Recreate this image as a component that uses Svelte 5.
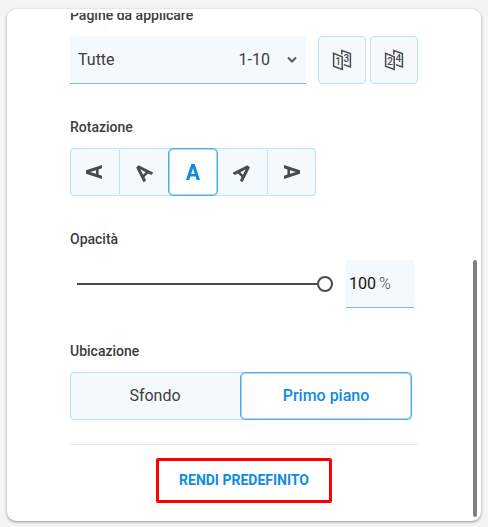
<script>
  let pages = $state("all");
  let rotation = $state(0);
  let opacity = $state(100);
  let layer = $state("front");

  const rotations = [-90, -45, 0, 45, 90];
  const layers = [
    { id: "back", name: "Sfondo" },
    { id: "front", name: "Primo piano" },
  ];
</script>

<main>
  <section class="card">
    <div class="content">
      <div class="group">
        <label class="title" for="pages">Pagine da applicare</label>
        <div class="row">
          <div class="dropdown">
            <select id="pages" bind:value={pages}>
              <option value="all">Tutte</option>
              <option value="odd">Dispari</option>
              <option value="even">Pari</option>
            </select>
            <span>1-10</span>
            <svg width="12" height="8" viewBox="0 0 12 8">
              <path d="M2 1.5l4 4 4-4" />
            </svg>
          </div>
          <div class="icons">
            <button class="icon" aria-label="Pagine dispari" onclick={() => (pages = "odd")}>
              <svg width="20" height="22" viewBox="0 0 20 22">
                <path d="M1.6 4.4v12.8l8.6 3.3V7.7z" />
                <path d="M9.8 5.6V1.6l8.6 3v13.4l-6.6-2.4" />
                <text x="3.2" y="15.8">1</text>
                <text x="11.4" y="12.8">3</text>
              </svg>
            </button>
            <button class="icon" aria-label="Pagine pari" onclick={() => (pages = "even")}>
              <svg width="20" height="22" viewBox="0 0 20 22">
                <path d="M1.6 4.4v12.8l8.6 3.3V7.7z" />
                <path d="M9.8 5.6V1.6l8.6 3v13.4l-6.6-2.4" />
                <text x="3.2" y="15.8">2</text>
                <text x="11.4" y="12.8">4</text>
              </svg>
            </button>
          </div>
        </div>
      </div>

      <div class="group">
        <span class="title" id="rotation">Rotazione</span>
        <div class="segments rotation" role="group" aria-labelledby="rotation">
          {#each rotations as angle}
            <button
              class:selected={rotation === angle}
              aria-pressed={rotation === angle}
              aria-label="{angle}°"
              onclick={() => (rotation = angle)}
            >
              <svg width="20" height="20" viewBox="-10 -10 20 20">
                <path
                  transform="rotate({angle})"
                  d="M-1.7-8H1.7L7 8H3.7L2.6 4.6H-2.6L-3.7 8H-7zM0-3.8L-1.8 2H1.8z"
                />
              </svg>
            </button>
          {/each}
        </div>
      </div>

      <div class="group">
        <label class="title" for="opacity">Opacità</label>
        <div class="row opacity">
          <input id="opacity" type="range" min="0" max="100" bind:value={opacity} />
          <div class="percent">
            <input type="text" aria-label="Opacità in percentuale" bind:value={opacity} />
            <span>%</span>
          </div>
        </div>
      </div>

      <div class="group">
        <span class="title" id="layer">Ubicazione</span>
        <div class="segments layer" role="group" aria-labelledby="layer">
          {#each layers as item}
            <button
              class:selected={layer === item.id}
              aria-pressed={layer === item.id}
              onclick={() => (layer = item.id)}
            >
              {item.name}
            </button>
          {/each}
        </div>
      </div>

      <footer>
        <button class="default">RENDI PREDEFINITO</button>
      </footer>
    </div>
    <div class="rail"><div class="thumb"></div></div>
  </section>
</main>

<style>
  :global(body) {
    background: #f4f4f4;
  }

  main {
    box-sizing: border-box;
    height: 100vh;
    padding: 9px 7px 6px;
    font-family: Roboto, "Liberation Sans", sans-serif;
    font-size: 16px;
    color: #3c3d3f;
  }

  .card {
    box-sizing: border-box;
    height: 100%;
    padding: 4px;
    display: flex;
    background: #fff;
    border-radius: 9px;
    box-shadow: 0 1px 3px rgba(0, 0, 0, 0.4);
  }

  .content {
    flex: 1;
    min-width: 0;
    padding: 0 55px 14px 59px;
    display: flex;
    flex-direction: column;
    justify-content: flex-end;
    overflow: hidden;
  }

  .rail {
    width: 4px;
    display: flex;
    flex-direction: column;
    justify-content: flex-end;
  }

  .thumb {
    height: 51%;
    border-radius: 2px;
    background: #808080;
  }

  button,
  input,
  select {
    box-sizing: border-box;
    margin: 0;
    padding: 0;
    border: 0;
    background: none;
    font: inherit;
    color: inherit;
  }

  button {
    cursor: pointer;
  }

  .group {
    display: flex;
    flex-direction: column;
    gap: 10px;
    margin-bottom: 32px;
    flex-shrink: 0;
  }

  .title {
    font-size: 14px;
    font-weight: 500;
    line-height: 22px;
  }

  .row {
    display: flex;
    gap: 12px;
  }

  .dropdown {
    flex: 1;
    box-sizing: border-box;
    height: 48px;
    padding: 0 8px;
    display: flex;
    align-items: center;
    border-bottom: 1px solid #75b9e6;
    border-radius: 4px 4px 0 0;
    background: #f3f9fd;
  }

  select {
    flex: 1;
    appearance: none;
    outline: none;
  }

  .dropdown svg {
    margin-left: 16px;
    fill: none;
    stroke: #5a5b5d;
    stroke-width: 2;
  }

  .icons {
    display: flex;
    gap: 4px;
  }

  .icon {
    width: 48px;
    height: 48px;
    display: flex;
    align-items: center;
    justify-content: center;
    border: 1px solid #bfe1f8;
    border-radius: 4px;
    background: #f3f9fd;
  }

  .icon path {
    fill: none;
    stroke: #4a4b4d;
    stroke-width: 1.5;
  }

  .icon text {
    font-size: 10px;
    font-weight: 500;
    fill: #4a4b4d;
  }

  .segments {
    display: flex;
    height: 48px;
    border-radius: 4px;
    background: #f3f9fd;
    box-shadow: inset 0 0 0 1px #bfe1f8;
  }

  .segments button {
    flex: 1;
    display: flex;
    align-items: center;
    justify-content: center;
  }

  .segments button + button {
    background: linear-gradient(#bfe1f8, #bfe1f8) left center / 1px 44px no-repeat;
  }

  .segments .selected,
  .segments button + .selected {
    border: 1px solid #4fabe8;
    border-radius: 5px;
    background: #fff;
    box-shadow: inset 0 0 0 1px #a9d6f4;
    color: #0f8ce0;
    font-weight: 500;
  }

  .segments .selected + button {
    background: none;
  }

  .rotation {
    width: 246px;
  }

  .rotation path {
    fill: currentColor;
    fill-rule: evenodd;
  }

  .rotation button {
    color: #4a4b4d;
  }

  .layer {
    margin-right: 6px;
  }

  .layer button {
    padding-bottom: 2px;
  }

  .opacity {
    gap: 13px;
    padding: 0 4px 0 7px;
  }

  input[type="range"] {
    flex: 1;
    min-width: 0;
    height: 48px;
    appearance: none;
  }

  input[type="range"]::-webkit-slider-runnable-track {
    height: 2px;
    background: #4a4b4d;
  }

  input[type="range"]::-webkit-slider-thumb {
    appearance: none;
    box-sizing: border-box;
    width: 16px;
    height: 16px;
    margin-top: -7px;
    border: 2px solid #4a4b4d;
    border-radius: 50%;
    background: #fff;
  }

  .percent {
    box-sizing: border-box;
    width: 68px;
    height: 48px;
    padding-left: 3px;
    display: flex;
    align-items: center;
    gap: 2px;
    border-bottom: 1px solid #75b9e6;
    background: #f3f9fd;
  }

  .percent input {
    width: 28px;
    color: #111;
    outline: none;
  }

  .percent span {
    font-size: 16px;
    font-weight: 300;
    color: #4a4b4d;
  }

  footer {
    margin-top: -8px;
    padding-top: 13px;
    display: flex;
    justify-content: center;
    border-top: 1px solid #e2e2e2;
  }

  .default {
    height: 45px;
    padding: 0 20px 2px;
    border: 3px solid #ff0000;
    border-radius: 2px;
    font-size: 14px;
    font-weight: 700;
    color: #0f8ce0;
  }
</style>
